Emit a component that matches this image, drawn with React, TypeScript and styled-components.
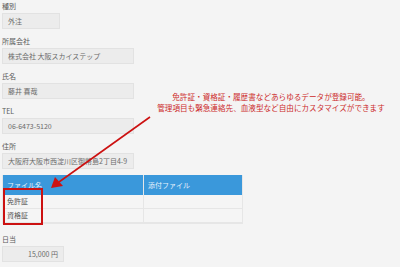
import styled, { createGlobalStyle } from 'styled-components'

const Global = createGlobalStyle`
  html, body {
    margin: 0;
    padding: 0;
    background: #f4f4f4;
  }
  body {
    font-family: "Noto Sans CJK JP", "Noto Sans", sans-serif;
    color: #555;
  }
`

const Page = styled.div`
  position: relative;
  width: 400px;
  height: 267px;
  overflow: hidden;
  padding: 2px 0 0 2px;
  box-sizing: border-box;
`

const Field = styled.div`
  margin-bottom: 8px;
`

const Label = styled.div`
  font-size: 7px;
  line-height: 9px;
  height: 9px;
  margin-bottom: 2px;
  color: #5a5a5a;
`

const Value = styled.div<{ $w: number; $right?: boolean }>`
  width: ${({ $w }) => $w}px;
  height: 16px;
  box-sizing: border-box;
  background: #ececec;
  border: 1px solid #e2e2e2;
  font-size: 7px;
  line-height: 14px;
  padding: 0 5px;
  color: #6a6a6a;
  text-align: ${({ $right }) => ($right ? 'right' : 'left')};
  white-space: nowrap;
  overflow: hidden;
`

const Table = styled.div`
  width: 241px;
  margin: -2px 0 11px 0;
  border: 1px solid #e6e6e6;
  border-top: none;
  box-sizing: border-box;
`

const Row = styled.div<{ $head?: boolean }>`
  display: grid;
  grid-template-columns: 140px 1fr;
  height: ${({ $head }) => ($head ? 20 : 14)}px;
  background: ${({ $head }) => ($head ? '#3a98db' : '#f5f5f5')};
  border-bottom: ${({ $head }) => ($head ? 'none' : '1px solid #e6e6e6')};
  box-sizing: border-box;
`

const Cell = styled.div<{ $head?: boolean }>`
  font-size: 7px;
  line-height: ${({ $head }) => ($head ? 20 : 13)}px;
  padding-left: 4px;
  color: ${({ $head }) => ($head ? '#e8f2fb' : '#555')};
  & + & {
    border-left: 1px solid ${({ $head }) => ($head ? '#3a98db' : '#e6e6e6')};
  }
`

const Note = styled.div`
  position: absolute;
  left: 140px;
  top: 91px;
  width: 262px;
  text-align: center;
  font-size: 7.6px;
  line-height: 11px;
  color: #cc2a2a;
  white-space: nowrap;
`

const Highlight = styled.div`
  position: absolute;
  left: 3px;
  top: 188px;
  width: 40px;
  height: 37px;
  box-sizing: border-box;
  border: 2px solid #cc1111;
`

const Arrow = styled.svg`
  position: absolute;
  left: 0;
  top: 0;
  pointer-events: none;
`

export default function App() {
  return (
    <Page>
      <Global />
      <Field>
        <Label>種別</Label>
        <Value $w={58}>外注</Value>
      </Field>
      <Field>
        <Label>所属会社</Label>
        <Value $w={132}>株式会社 大阪スカイステップ</Value>
      </Field>
      <Field>
        <Label>氏名</Label>
        <Value $w={132}>藤井 喜哉</Value>
      </Field>
      <Field>
        <Label>TEL</Label>
        <Value $w={132}>06-6473-5120</Value>
      </Field>
      <Field>
        <Label>住所</Label>
        <Value $w={132}>大阪府大阪市西淀川区御幣島2丁目4-9</Value>
      </Field>
      <Table>
        <Row $head>
          <Cell $head>ファイル名</Cell>
          <Cell $head>添付ファイル</Cell>
        </Row>
        <Row>
          <Cell>免許証</Cell>
          <Cell />
        </Row>
        <Row>
          <Cell>資格証</Cell>
          <Cell />
        </Row>
      </Table>
      <Field>
        <Label>日当</Label>
        <Value $w={62} $right>15,000 円</Value>
      </Field>

      <Note>
        免許証・資格証・履歴書などあらゆるデータが登録可能。
        <br />
        管理項目も緊急連絡先、血液型など自由にカスタマイズができます
      </Note>
      <Highlight />
      <Arrow width="400" height="267" viewBox="0 0 400 267">
        <line x1="150" y1="117" x2="59" y2="182" stroke="#cc1111" strokeWidth="1.6" />
        <polygon points="51,188 55,177 63,186" fill="#cc1111" />
      </Arrow>
    </Page>
  )
}
